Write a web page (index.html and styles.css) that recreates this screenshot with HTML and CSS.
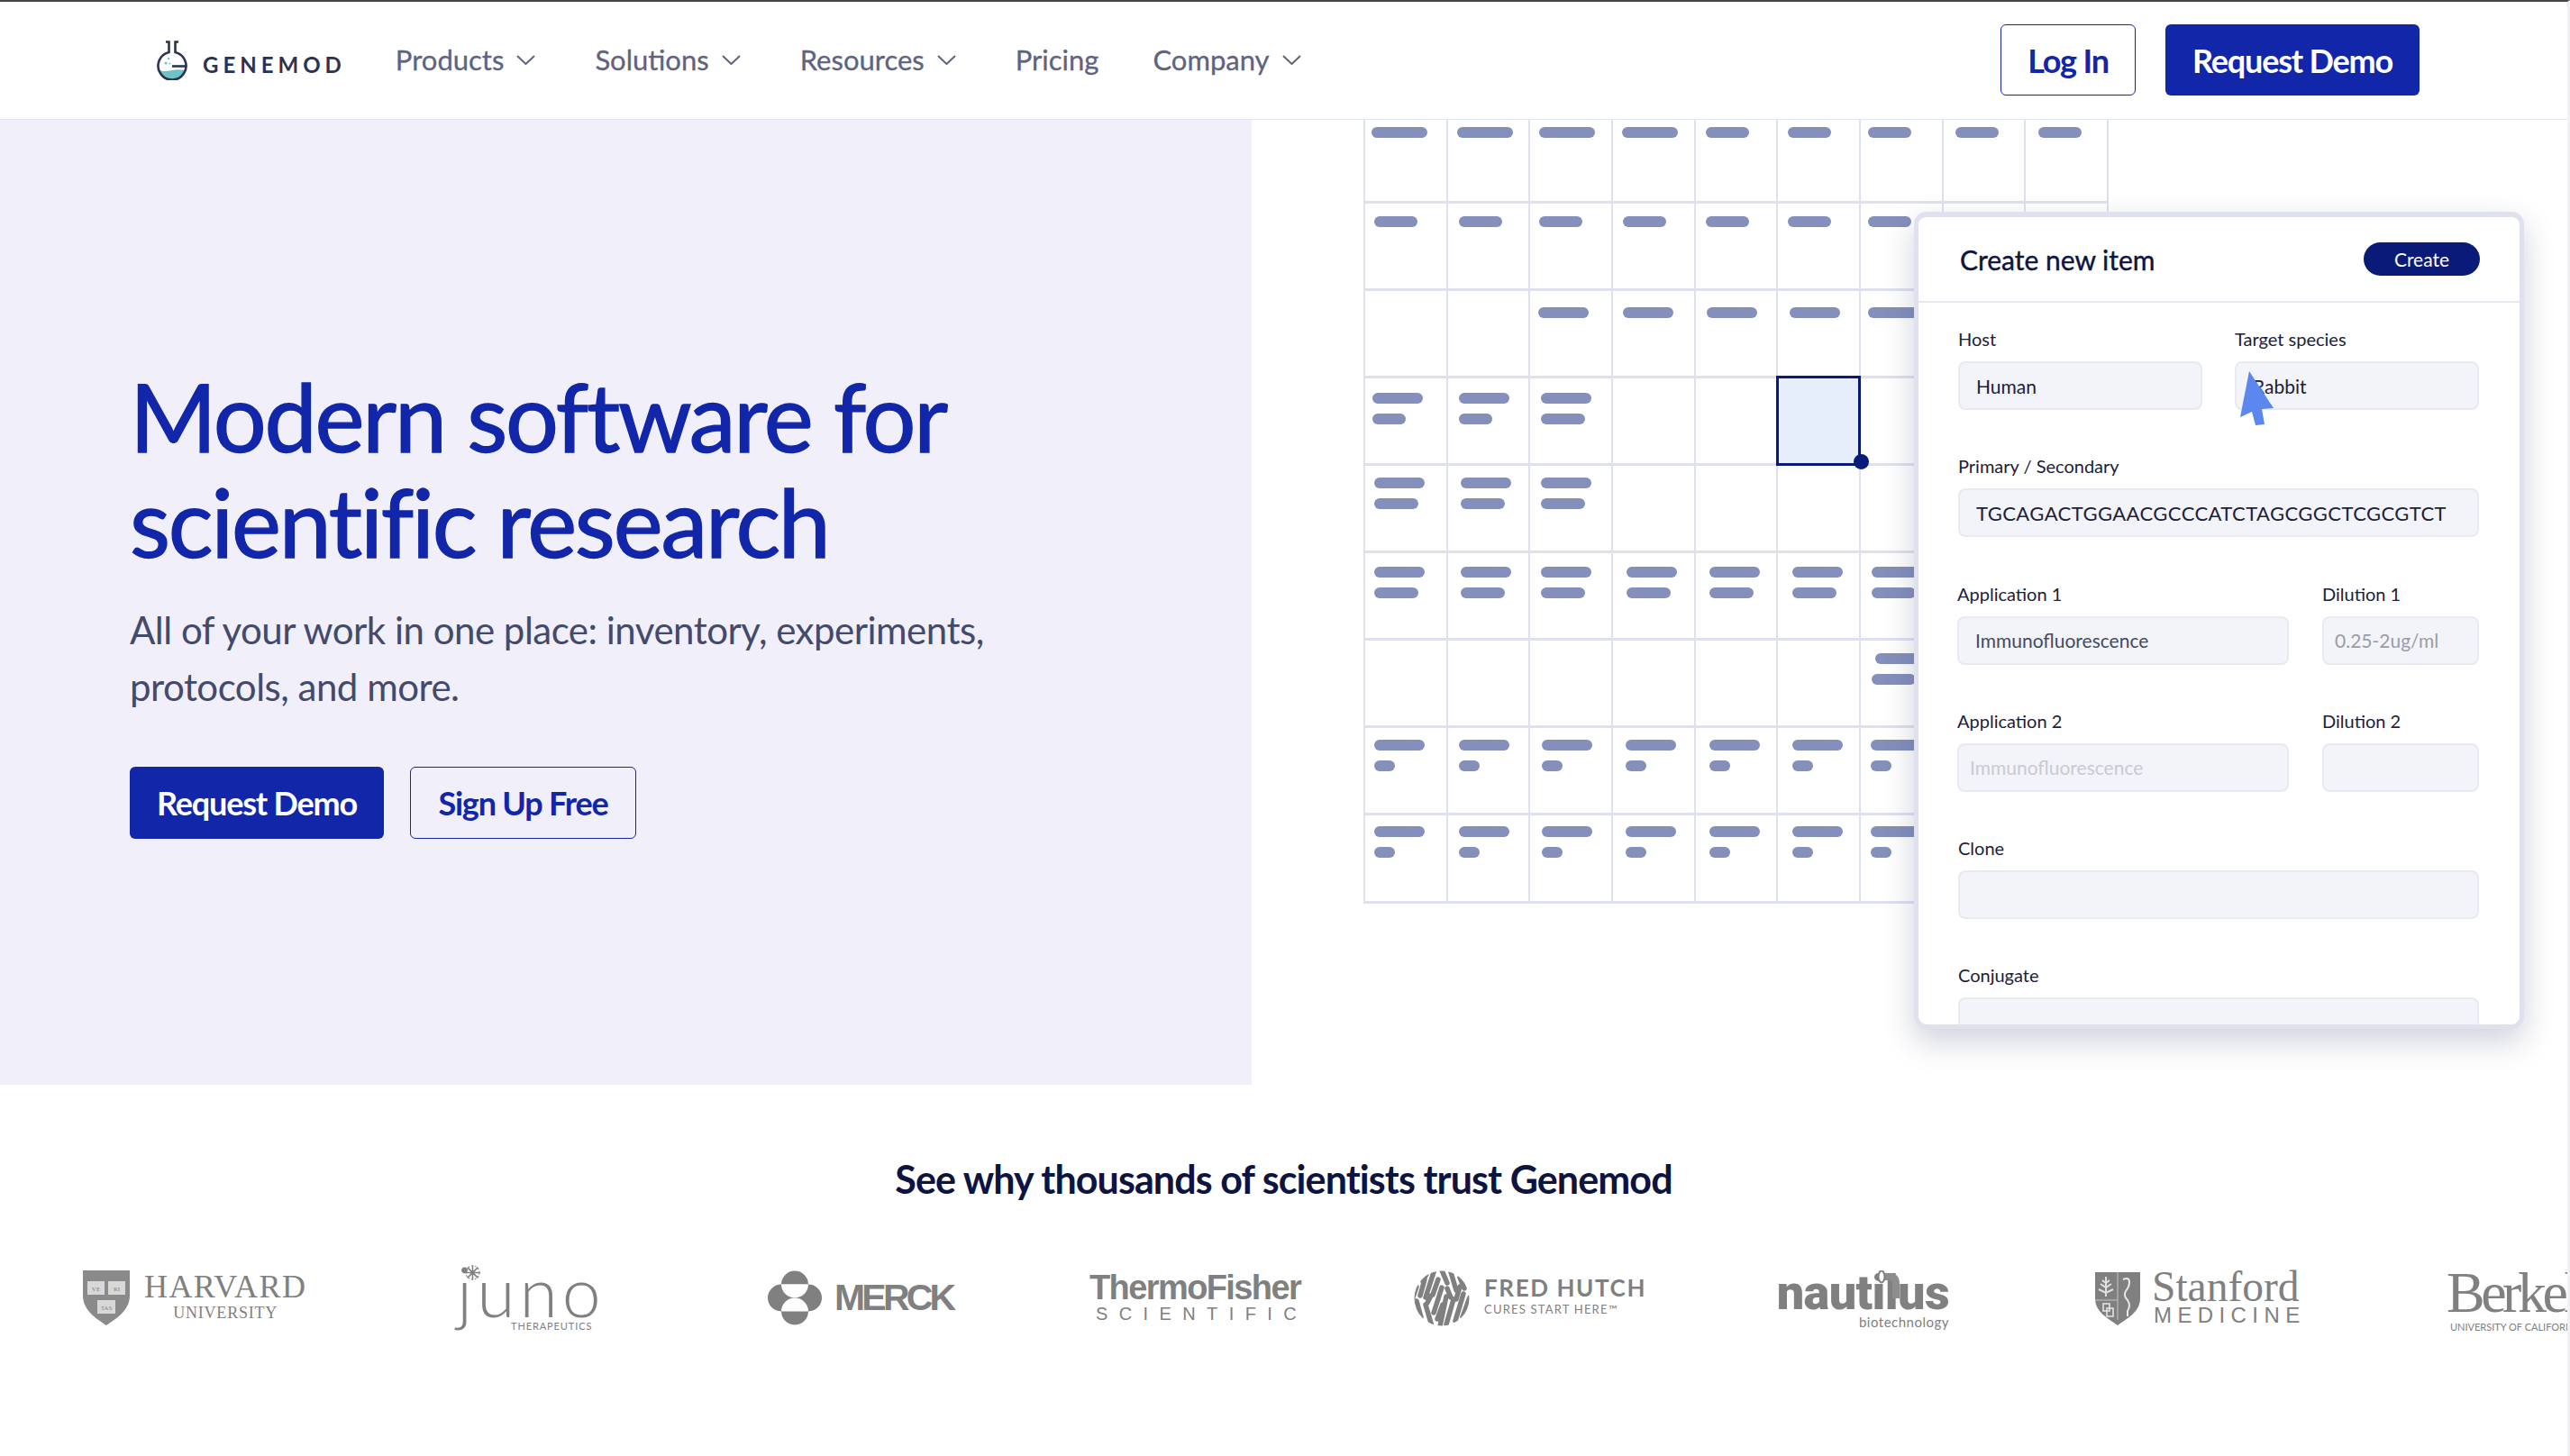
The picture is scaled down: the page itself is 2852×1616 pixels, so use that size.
FILE: index.html

```html
<!DOCTYPE html>
<html lang="en">
<head>
  <meta charset="UTF-8" />
  <meta name="viewport" content="width=device-width, initial-scale=1.0" />
  <title>Genemod</title>
  <link rel="stylesheet" href="styles.css">
</head>
<body>
<div class="page">

  <!-- nav -->
  <header class="nav">
    <a class="brand" href="#">
      <svg class="flask" viewBox="0 0 34 44">
        <path d="M3.6 33 C10 36.5 20 30 30.4 33 A14 14 0 0 1 3.6 33 Z" fill="#6fc3c6"/>
        <circle cx="10" cy="25" r="1.5" fill="#6fc3c6"/>
        <circle cx="13" cy="20" r="1.2" fill="#6fc3c6"/>
        <circle cx="14.5" cy="25.5" r="1" fill="#6fc3c6"/>
        <path d="M10 1.5 H13.5 V13 A15.5 15.5 0 1 0 20.5 13 V1.5 H24" fill="none" stroke="#2b3350" stroke-width="2.6"/>
        <path d="M17 28.5 H32" fill="none" stroke="#2b3350" stroke-width="2.6"/>
      </svg>
      <span class="brand-name">GENEMOD</span>
    </a>
    <nav class="nav-links">
      <a href="#">Products <svg class="chev" viewBox="0 0 21 11"><path d="M1 1 L10.5 10 L20 1"/></svg></a>
      <a href="#">Solutions <svg class="chev" viewBox="0 0 21 11"><path d="M1 1 L10.5 10 L20 1"/></svg></a>
      <a href="#">Resources <svg class="chev" viewBox="0 0 21 11"><path d="M1 1 L10.5 10 L20 1"/></svg></a>
      <a class="pricing" href="#">Pricing</a>
      <a href="#">Company <svg class="chev" viewBox="0 0 21 11"><path d="M1 1 L10.5 10 L20 1"/></svg></a>
    </nav>
    <div class="nav-actions">
      <a class="btn btn-outline btn-login" href="#">Log In</a>
      <a class="btn btn-solid btn-demo" href="#">Request Demo</a>
    </div>
  </header>

  <!-- hero -->
  <section class="hero">
    <div class="hero-left">
      <h1>Modern software for<br>scientific research</h1>
      <p>All of your work in one place: inventory, experiments,<br>protocols, and more.</p>
      <div class="hero-actions">
        <a class="btn btn-solid btn-hero-demo" href="#">Request Demo</a>
        <a class="btn btn-outline btn-signup" href="#">Sign Up Free</a>
      </div>
    </div>

    <div class="hero-right">
      <div class="sheet">
        <!-- row 1 -->
        <div class="cell r1 p7"><i class="w62"></i></div>
        <div class="cell r1 p10"><i class="w62"></i></div>
        <div class="cell r1 p10"><i class="w62"></i></div>
        <div class="cell r1 p10"><i class="w62"></i></div>
        <div class="cell r1 p11"><i class="w48"></i></div>
        <div class="cell r1 p11"><i class="w48"></i></div>
        <div class="cell r1 p8"><i class="w48"></i></div>
        <div class="cell r1 p13"><i class="w48"></i></div>
        <div class="cell r1 p14"><i class="w48"></i></div>
        <!-- row 2 -->
        <div class="cell r2 p10"><i class="w48"></i></div>
        <div class="cell r2 p12"><i class="w48"></i></div>
        <div class="cell r2 p10"><i class="w48"></i></div>
        <div class="cell r2 p11"><i class="w48"></i></div>
        <div class="cell r2 p11"><i class="w48"></i></div>
        <div class="cell r2 p11"><i class="w48"></i></div>
        <div class="cell r2 p8"><i class="w48"></i></div>
        <div class="cell"></div>
        <div class="cell"></div>
        <!-- row 3 -->
        <div class="cell"></div>
        <div class="cell"></div>
        <div class="cell r3 p9"><i class="w56"></i></div>
        <div class="cell r3 p11"><i class="w56"></i></div>
        <div class="cell r3 p12"><i class="w56"></i></div>
        <div class="cell r3 p13"><i class="w56"></i></div>
        <div class="cell r3 p8"><i class="w56"></i></div>
        <div class="cell"></div>
        <div class="cell"></div>
        <!-- row 4 -->
        <div class="cell r4 p8"><i class="w56"></i><i class="w37"></i></div>
        <div class="cell r4 p12"><i class="w56"></i><i class="w37"></i></div>
        <div class="cell r4 p12"><i class="w56"></i><i class="w49"></i></div>
        <div class="cell"></div>
        <div class="cell"></div>
        <div class="cell selected"><span class="handle"></span></div>
        <div class="cell"></div>
        <div class="cell"></div>
        <div class="cell"></div>
        <!-- row 5 -->
        <div class="cell r5 p10"><i class="w56"></i><i class="w49"></i></div>
        <div class="cell r5 p14"><i class="w56"></i><i class="w49"></i></div>
        <div class="cell r5 p12"><i class="w56"></i><i class="w49"></i></div>
        <div class="cell"></div>
        <div class="cell"></div>
        <div class="cell"></div>
        <div class="cell"></div>
        <div class="cell"></div>
        <div class="cell"></div>
        <!-- row 6 -->
        <div class="cell r6 p10"><i class="w56"></i><i class="w49"></i></div>
        <div class="cell r6 p14"><i class="w56"></i><i class="w49"></i></div>
        <div class="cell r6 p12"><i class="w56"></i><i class="w49"></i></div>
        <div class="cell r6 p15"><i class="w56"></i><i class="w49"></i></div>
        <div class="cell r6 p15"><i class="w56"></i><i class="w49"></i></div>
        <div class="cell r6 p16"><i class="w56"></i><i class="w49"></i></div>
        <div class="cell r6 p12"><i class="w56"></i><i class="w49"></i></div>
        <div class="cell"></div>
        <div class="cell"></div>
        <!-- row 7 -->
        <div class="cell"></div>
        <div class="cell"></div>
        <div class="cell"></div>
        <div class="cell"></div>
        <div class="cell"></div>
        <div class="cell"></div>
        <div class="cell r7 p12"><i class="w56 nudge"></i><i class="w49"></i></div>
        <div class="cell"></div>
        <div class="cell"></div>
        <!-- row 8 -->
        <div class="cell r8 p10"><i class="w56"></i><i class="w23"></i></div>
        <div class="cell r8 p12"><i class="w56"></i><i class="w23"></i></div>
        <div class="cell r8 p13"><i class="w56"></i><i class="w23"></i></div>
        <div class="cell r8 p14"><i class="w56"></i><i class="w23"></i></div>
        <div class="cell r8 p15"><i class="w56"></i><i class="w23"></i></div>
        <div class="cell r8 p16"><i class="w56"></i><i class="w23"></i></div>
        <div class="cell r8 p11"><i class="w56"></i><i class="w23"></i></div>
        <div class="cell"></div>
        <div class="cell"></div>
        <!-- row 9 -->
        <div class="cell r9 p10"><i class="w56"></i><i class="w23"></i></div>
        <div class="cell r9 p12"><i class="w56"></i><i class="w23"></i></div>
        <div class="cell r9 p13"><i class="w56"></i><i class="w23"></i></div>
        <div class="cell r9 p14"><i class="w56"></i><i class="w23"></i></div>
        <div class="cell r9 p15"><i class="w56"></i><i class="w23"></i></div>
        <div class="cell r9 p16"><i class="w56"></i><i class="w23"></i></div>
        <div class="cell r9 p11"><i class="w56"></i><i class="w23"></i></div>
        <div class="cell"></div>
        <div class="cell"></div>
      </div>

      <div class="card">
        <div class="card-head">
          <h2>Create new item</h2>
          <span class="pill-btn">Create</span>
        </div>
        <div class="card-body">
          <div class="row two">
            <div><label>Host</label><div class="field">Human</div></div>
            <div><label>Target species</label><div class="field">Rabbit</div></div>
          </div>
          <div class="row">
            <div><label>Primary / Secondary</label><div class="field seq">TGCAGACTGGAACGCCCATCTAGCGGCTCGCGTCT</div></div>
          </div>
          <div class="row split">
            <div><label>Application 1</label><div class="field soft">Immunofluorescence</div></div>
            <div><label>Dilution 1</label><div class="field muted">0.25-2ug/ml</div></div>
          </div>
          <div class="row split">
            <div><label>Application 2</label><div class="field faint">Immunofluorescence</div></div>
            <div><label>Dilution 2</label><div class="field"></div></div>
          </div>
          <div class="row">
            <div><label>Clone</label><div class="field"></div></div>
          </div>
          <div class="row">
            <div><label>Conjugate</label><div class="field"></div></div>
          </div>
        </div>
        <svg class="cursor" viewBox="0 0 38 60"><path d="M10 0 L37 41 L24 42 L27 59 L17 60 L13 45 L0 51 Z"/></svg>
      </div>
    </div>
  </section>

  <!-- logos -->
  <section class="trust">
    <h3>See why thousands of scientists trust Genemod</h3>
    <div class="logos">

      <div class="logo harvard">
        <svg class="shield-h" viewBox="0 0 52 61">
          <path d="M0 0 H52 V28 C52 45 36 54 26 61 C16 54 0 45 0 28 Z" fill="#8a8a8a"/>
          <rect x="5" y="12" width="19" height="15" fill="#d8d8d8"/>
          <rect x="28" y="12" width="19" height="15" fill="#d8d8d8"/>
          <rect x="16" y="33" width="20" height="15" fill="#d8d8d8"/>
          <text x="14.5" y="23" class="ve">VE</text>
          <text x="37.5" y="23" class="ve">RI</text>
          <text x="26" y="44" class="ve">TAS</text>
        </svg>
        <div class="harvard-text">
          <span class="harvard-a">HARVARD</span>
          <span class="harvard-b">UNIVERSITY</span>
        </div>
      </div>

      <div class="logo juno">
        <svg class="juno-star" viewBox="0 0 18 18">
          <g stroke="#808080" stroke-width="1.6" stroke-linecap="round">
            <path d="M9 1 V17 M1 9 H17 M3.3 3.3 L14.7 14.7 M14.7 3.3 L3.3 14.7"/>
          </g>
          <circle cx="9" cy="9" r="8" fill="none" stroke="#808080" stroke-width="1.2" stroke-dasharray="2 2"/>
        </svg>
        <span class="juno-a">juno</span>
        <span class="juno-b">THERAPEUTICS</span>
      </div>

      <div class="logo merck">
        <svg class="merck-mark" viewBox="0 0 60 61">
          <circle cx="15" cy="30.5" r="15" fill="#808080"/>
          <circle cx="45" cy="30.5" r="15" fill="#808080"/>
          <path d="M15 15.5 A15 15 0 0 1 45 15.5 Z" fill="#808080"/>
          <path d="M15 15.5 A15 15 0 0 0 45 15.5 Z" fill="#fff"/>
          <path d="M15 45.5 A15 15 0 0 1 45 45.5 Z" fill="#fff"/>
          <path d="M15 45.5 A15 15 0 0 0 45 45.5 Z" fill="#808080"/>
        </svg>
        <span class="merck-a">MERCK</span>
      </div>

      <div class="logo thermo">
        <span class="thermo-a">ThermoFisher</span>
        <span class="thermo-b">SCIENTIFIC</span>
      </div>

      <div class="logo fred">
        <svg class="fred-mark" viewBox="0 0 62 62">
          <clipPath id="fredClip"><circle cx="31" cy="31" r="30.5"/></clipPath>
          <g clip-path="url(#fredClip)" stroke="#808080" stroke-width="5.5" stroke-linecap="round" fill="none">
            <path d="M3 18 L-1 30 M3 34 L8 52 M12 10 L7 28 M10 12 L17 -2"/>
            <path d="M22 2 L13 30 M13 38 L20 62 M19 28 L15 36"/>
            <path d="M31 0 L37 14 M27 10 L21 27 M31 19 L22 47 M26 54 L32 38"/>
            <path d="M41 2 L47 22 M37 20 L41 30 M36 29 L29 62 M44 32 L36 60"/>
            <path d="M51 8 L56 20 M47 32 L51 18 M55 26 L46 56 M62 30 L54 52"/>
          </g>
        </svg>
        <div class="fred-text">
          <span class="fred-a">FRED HUTCH</span>
          <span class="fred-b">CURES START HERE&#8482;</span>
        </div>
      </div>

      <div class="logo nautilus">
        <span class="nautilus-a">nautilus</span>
        <span class="nautilus-b">biotechnology</span>
        <svg class="periscope" viewBox="0 0 26 32">
          <path d="M6 7 H14 Q21 7 21 15 V31" fill="none" stroke="#8e8e8e" stroke-width="8"/>
          <ellipse cx="5" cy="7" rx="3.5" ry="6.5" fill="#fff" stroke="#808080" stroke-width="2"/>
        </svg>
      </div>

      <div class="logo stanford">
        <svg class="shield-s" viewBox="0 0 50 60">
          <path d="M0 1 H50 V30 C50 45 36 52 25 60 C14 52 0 45 0 30 Z" fill="#808080"/>
          <path d="M25 1 V54 M0 32 H25" stroke="#c4c4c4" stroke-width="1" fill="none"/>
          <path d="M12 6 V28 M6 14 L12 18 L18 14 M4 20 L12 24 L20 20 M8 10 L12 13 L16 10" stroke="#e0e0e0" stroke-width="2" fill="none"/>
          <path d="M31 9 Q38 6 38 12 Q38 17 34 22 Q31 27 36 32 Q40 38 36 44 L36 50" stroke="#e8e8e8" stroke-width="2" fill="none"/>
          <path d="M9 36 H16 V44 H9 Z M13 41 H20 V50 H13 Z" stroke="#e8e8e8" stroke-width="1.5" fill="none"/>
        </svg>
        <div class="stanford-text">
          <span class="stanford-a">Stanford</span>
          <span class="stanford-b">MEDICINE</span>
        </div>
      </div>

      <div class="logo berkeley">
        <span class="berkeley-a">Berkeley</span>
        <span class="berkeley-b">UNIVERSITY OF CALIFORNIA</span>
      </div>

    </div>
  </section>
</div>
</body>
</html>
```

FILE: styles.css

```css
* {
  box-sizing: border-box;
}

body {
  margin: 0;
  font-family: Lato, Arial, sans-serif;
  background: #fff;
}

a {
  text-decoration: none;
}

.page {
  width: 2852px;
  height: 1616px;
  overflow: hidden;
  border-top: 2px solid #444;
  border-right: 3px solid #f1f1f3;
}

/* nav */
.nav {
  display: flex;
  align-items: center;
  height: 131px;
  padding-left: 174px;
  padding-right: 164px;
  border-bottom: 1px solid #dfe6f1;
}

.brand {
  display: flex;
  align-items: flex-end;
  gap: 17px;
  margin-right: 55px;
  color: #2b3350;
}

.flask {
  width: 34px;
  height: 44px;
}

.brand-name {
  margin-bottom: 5px;
  font-size: 24px;
  font-weight: 700;
  line-height: 24px;
  letter-spacing: 5px;
}

.nav-links {
  display: flex;
  gap: 66px;
  margin-top: -2px;
}

.nav-links a {
  display: flex;
  align-items: center;
  gap: 14px;
  font-size: 31px;
  color: #5f6380;
  -webkit-text-stroke: 0.3px #5f6380;
}

.nav-links .pricing {
  margin-right: -6px;
}

.chev {
  width: 21px;
  height: 11px;
  fill: none;
  stroke: #5f6380;
  stroke-width: 2;
}

.nav-actions {
  display: flex;
  gap: 33px;
  margin-left: auto;
  margin-top: -1px;
}

.btn {
  display: flex;
  align-items: center;
  justify-content: center;
  height: 79px;
  font-size: 36px;
  font-weight: 700;
  letter-spacing: -1.2px;
  border-radius: 6px;
}

.btn-solid {
  background: #1226aa;
  color: #fff;
}

.btn-outline {
  border: 1.5px solid #1226aa;
  color: #1226aa;
}

.btn-login {
  width: 150px;
}

.btn-demo,
.btn-hero-demo {
  width: 282px;
}

.btn-signup {
  width: 251px;
}

/* hero */
.hero {
  display: flex;
  height: 1071px;
}

.hero-left {
  width: 1389px;
  flex-shrink: 0;
  padding: 270px 0 0 144px;
  background: #f0effa;
}

.hero-left h1 {
  margin: 0;
  font-size: 104px;
  font-weight: 400;
  line-height: 117px;
  letter-spacing: -2.2px;
  font-variant-ligatures: none;
  color: #1226aa;
  -webkit-text-stroke: 1.4px #1226aa;
}

.hero-left p {
  margin: 31px 0 0;
  font-size: 42px;
  line-height: 63px;
  letter-spacing: -0.5px;
  color: #434a6b;
}

.hero-actions {
  display: flex;
  gap: 29px;
  margin-top: 57px;
}

.hero-actions .btn {
  height: 80px;
}

.hero-right {
  position: relative;
  flex: 1;
  padding-left: 124px;
}

/* sheet behind the card */
.sheet {
  display: grid;
  grid-template-columns: repeat(9, 91.67px);
  grid-template-rows: 93px repeat(7, 97px) 98px;
  width: 827px;
  border-left: 2px solid #dfe1ee;
}

.cell {
  display: flex;
  flex-direction: column;
  align-items: flex-start;
  gap: 11px;
  border-right: 2px solid #dfe1ee;
  border-bottom: 3px solid #dfe1ee;
}

.cell i {
  display: block;
  height: 12px;
  border-radius: 6px;
  background: #858fbc;
}

.cell i.nudge {
  margin-left: 4px;
}

.r1 { padding-top: 8px; }
.r2 { padding-top: 14px; }
.r3 { padding-top: 18px; }
.r4 { padding-top: 16px; }
.r5 { padding-top: 13px; }
.r6 { padding-top: 15px; }
.r7 { padding-top: 14px; }
.r8 { padding-top: 13px; }
.r9 { padding-top: 12px; }

.p7 { padding-left: 7px; }
.p8 { padding-left: 8px; }
.p9 { padding-left: 9px; }
.p10 { padding-left: 10px; }
.p11 { padding-left: 11px; }
.p12 { padding-left: 12px; }
.p13 { padding-left: 13px; }
.p14 { padding-left: 14px; }
.p15 { padding-left: 15px; }
.p16 { padding-left: 16px; }

.w23 { width: 23px; }
.w37 { width: 37px; }
.w48 { width: 48px; }
.w49 { width: 49px; }
.w56 { width: 56px; }
.w62 { width: 62px; }

.selected {
  position: relative;
}

.selected::before {
  content: "";
  position: absolute;
  inset: -3px -2px -3px -2px;
  background: #e6edfb;
  border: 3px solid #0a1a78;
}

.handle {
  position: absolute;
  right: -11px;
  bottom: -7px;
  width: 17px;
  height: 17px;
  border-radius: 50%;
  background: #0a1a78;
}

/* create item card */
.card {
  position: absolute;
  left: 735px;
  top: 102px;
  width: 677px;
  height: 907px;
  overflow: hidden;
  background: #fff;
  border: 5px solid #dfe1ee;
  border-top-width: 6px;
  border-radius: 14px;
  box-shadow: 0 14px 34px rgba(40, 50, 100, 0.22);
}

.card-head {
  display: flex;
  align-items: center;
  justify-content: space-between;
  height: 95px;
  padding: 0 44px 0 46px;
  border-bottom: 2px solid #e6e7ef;
}

.card-head h2 {
  margin: 0;
  font-size: 30px;
  font-weight: 400;
  color: #0d1440;
  -webkit-text-stroke: 0.4px #0d1440;
}

.pill-btn {
  display: flex;
  align-items: center;
  justify-content: center;
  width: 129px;
  height: 37px;
  border-radius: 19px;
  background: #0a1a78;
  color: #fff;
  font-size: 21px;
}

.card-body {
  display: flex;
  flex-direction: column;
  gap: 48.3px;
  padding: 26px 45px 0 44px;
}

.row {
  display: grid;
  grid-template-columns: 1fr;
}

.row.two {
  grid-template-columns: 271px 271px;
  column-gap: 36px;
}

.row.split {
  grid-template-columns: 368px 174px;
  column-gap: 37px;
  margin-left: -1px;
}

.row label {
  display: block;
  margin-bottom: 11px;
  font-size: 20px;
  line-height: 28px;
  color: #1c2138;
}

.field {
  display: flex;
  align-items: center;
  height: 54px;
  padding-left: 18px;
  border: 2px solid #e9eaf1;
  border-radius: 8px;
  background: #f3f4f9;
  font-size: 21px;
  color: #1c2138;
}

.field.seq {
  font-size: 22px;
  letter-spacing: 0.43px;
}

.field.soft {
  color: #444a60;
}

.field.muted {
  padding-left: 12px;
  color: #9a9ca6;
}

.field.faint {
  padding-left: 12px;
  color: #c8cad2;
}

.cursor {
  position: absolute;
  left: 357px;
  top: 171px;
  width: 38px;
  height: 60px;
  fill: #5b87ee;
}

/* logos */
.trust {
  padding-top: 83px;
}

.trust h3 {
  margin: 0;
  text-align: center;
  font-size: 43px;
  font-weight: 700;
  line-height: 44px;
  letter-spacing: -0.9px;
  color: #0d1440;
}

.logos {
  display: flex;
  align-items: flex-start;
  width: 2852px;
  margin-top: 73px;
  padding-left: 92px;
  color: #808080;
}

.logo {
  position: relative;
  flex-shrink: 0;
}

.logo svg {
  flex-shrink: 0;
}

.harvard {
  display: flex;
  width: 245px;
  gap: 16px;
  padding-top: 6px;
  font-family: "Liberation Serif", serif;
}

.shield-h {
  width: 52px;
  height: 61px;
}

.ve {
  font-size: 7px;
  text-anchor: middle;
  fill: #808080;
}

.harvard-text {
  display: flex;
  flex-direction: column;
  align-items: center;
}

.harvard-a {
  font-size: 36px;
  line-height: 36px;
  letter-spacing: 1.4px;
}

.harvard-b {
  font-size: 18px;
  line-height: 22px;
  letter-spacing: 0.8px;
}

.juno {
  display: flex;
  flex-direction: column;
  width: 154px;
  margin-left: 170px;
}

.juno-star {
  width: 17px;
  height: 17px;
  margin-left: 9px;
}

.juno-a {
  margin-top: -28px;
  font-size: 77px;
  font-weight: 300;
  line-height: 78px;
  letter-spacing: 5px;
}

.juno-b {
  margin-top: -6px;
  padding-left: 60px;
  font-size: 11px;
  line-height: 13px;
  white-space: nowrap;
  letter-spacing: 0.9px;
}

.merck {
  display: flex;
  align-items: center;
  gap: 14px;
  width: 205px;
  margin-left: 191px;
  padding-top: 6px;
}

.merck-mark {
  width: 60px;
  height: 61px;
}

.merck-a {
  font-family: "Liberation Sans", sans-serif;
  font-size: 41px;
  font-weight: 700;
  letter-spacing: -3.8px;
}

.thermo {
  display: flex;
  flex-direction: column;
  width: 235px;
  margin-left: 152px;
  padding-top: 7px;
  font-family: "Liberation Sans", sans-serif;
}

.thermo-a {
  font-size: 38px;
  font-weight: 700;
  line-height: 36px;
  letter-spacing: -1.6px;
}

.thermo-b {
  padding-left: 7px;
  font-size: 20px;
  line-height: 22px;
  letter-spacing: 12.4px;
  white-space: nowrap;
}

.fred {
  display: flex;
  gap: 16px;
  width: 255px;
  margin-left: 125px;
  padding-top: 6px;
}

.fred-mark {
  width: 62px;
  height: 62px;
}

.fred-text {
  display: flex;
  flex-direction: column;
  padding-top: 4px;
}

.fred-a {
  font-size: 26px;
  font-weight: 700;
  line-height: 30px;
  letter-spacing: 1.6px;
  white-space: nowrap;
}

.fred-b {
  font-size: 13px;
  line-height: 19px;
  letter-spacing: 1.2px;
  white-space: nowrap;
}

.nautilus {
  display: flex;
  flex-direction: column;
  align-items: flex-end;
  width: 190px;
  margin-left: 149px;
  padding-top: 3px;
}

.nautilus-a {
  font-family: Roboto, sans-serif;
  font-size: 54px;
  font-weight: 900;
  line-height: 56px;
  letter-spacing: -0.6px;
}

.nautilus-b {
  margin-top: -5px;
  font-size: 15px;
  line-height: 18px;
  letter-spacing: 0.5px;
}

.periscope {
  position: absolute;
  left: 110px;
  top: 6px;
  width: 26px;
  height: 32px;
}

.stanford {
  display: flex;
  gap: 13px;
  width: 225px;
  margin-left: 162px;
  padding-top: 7px;
  font-family: "Liberation Serif", serif;
}

.shield-s {
  width: 50px;
  height: 60px;
}

.stanford-text {
  display: flex;
  flex-direction: column;
  margin-top: -3px;
}

.stanford-a {
  font-size: 47.5px;
  line-height: 40px;
}

.stanford-b {
  padding-left: 2px;
  font-family: "Liberation Sans", sans-serif;
  font-size: 24px;
  line-height: 24px;
  letter-spacing: 6.4px;
  white-space: nowrap;
}

.berkeley {
  display: flex;
  flex-direction: column;
  margin-left: 165px;
  padding-top: 3px;
  white-space: nowrap;
}

.berkeley-a {
  font-family: "Liberation Serif", serif;
  font-size: 64px;
  line-height: 56px;
  letter-spacing: -4.5px;
}

.berkeley-b {
  padding-left: 4px;
  font-size: 11px;
  line-height: 20px;
}
```
